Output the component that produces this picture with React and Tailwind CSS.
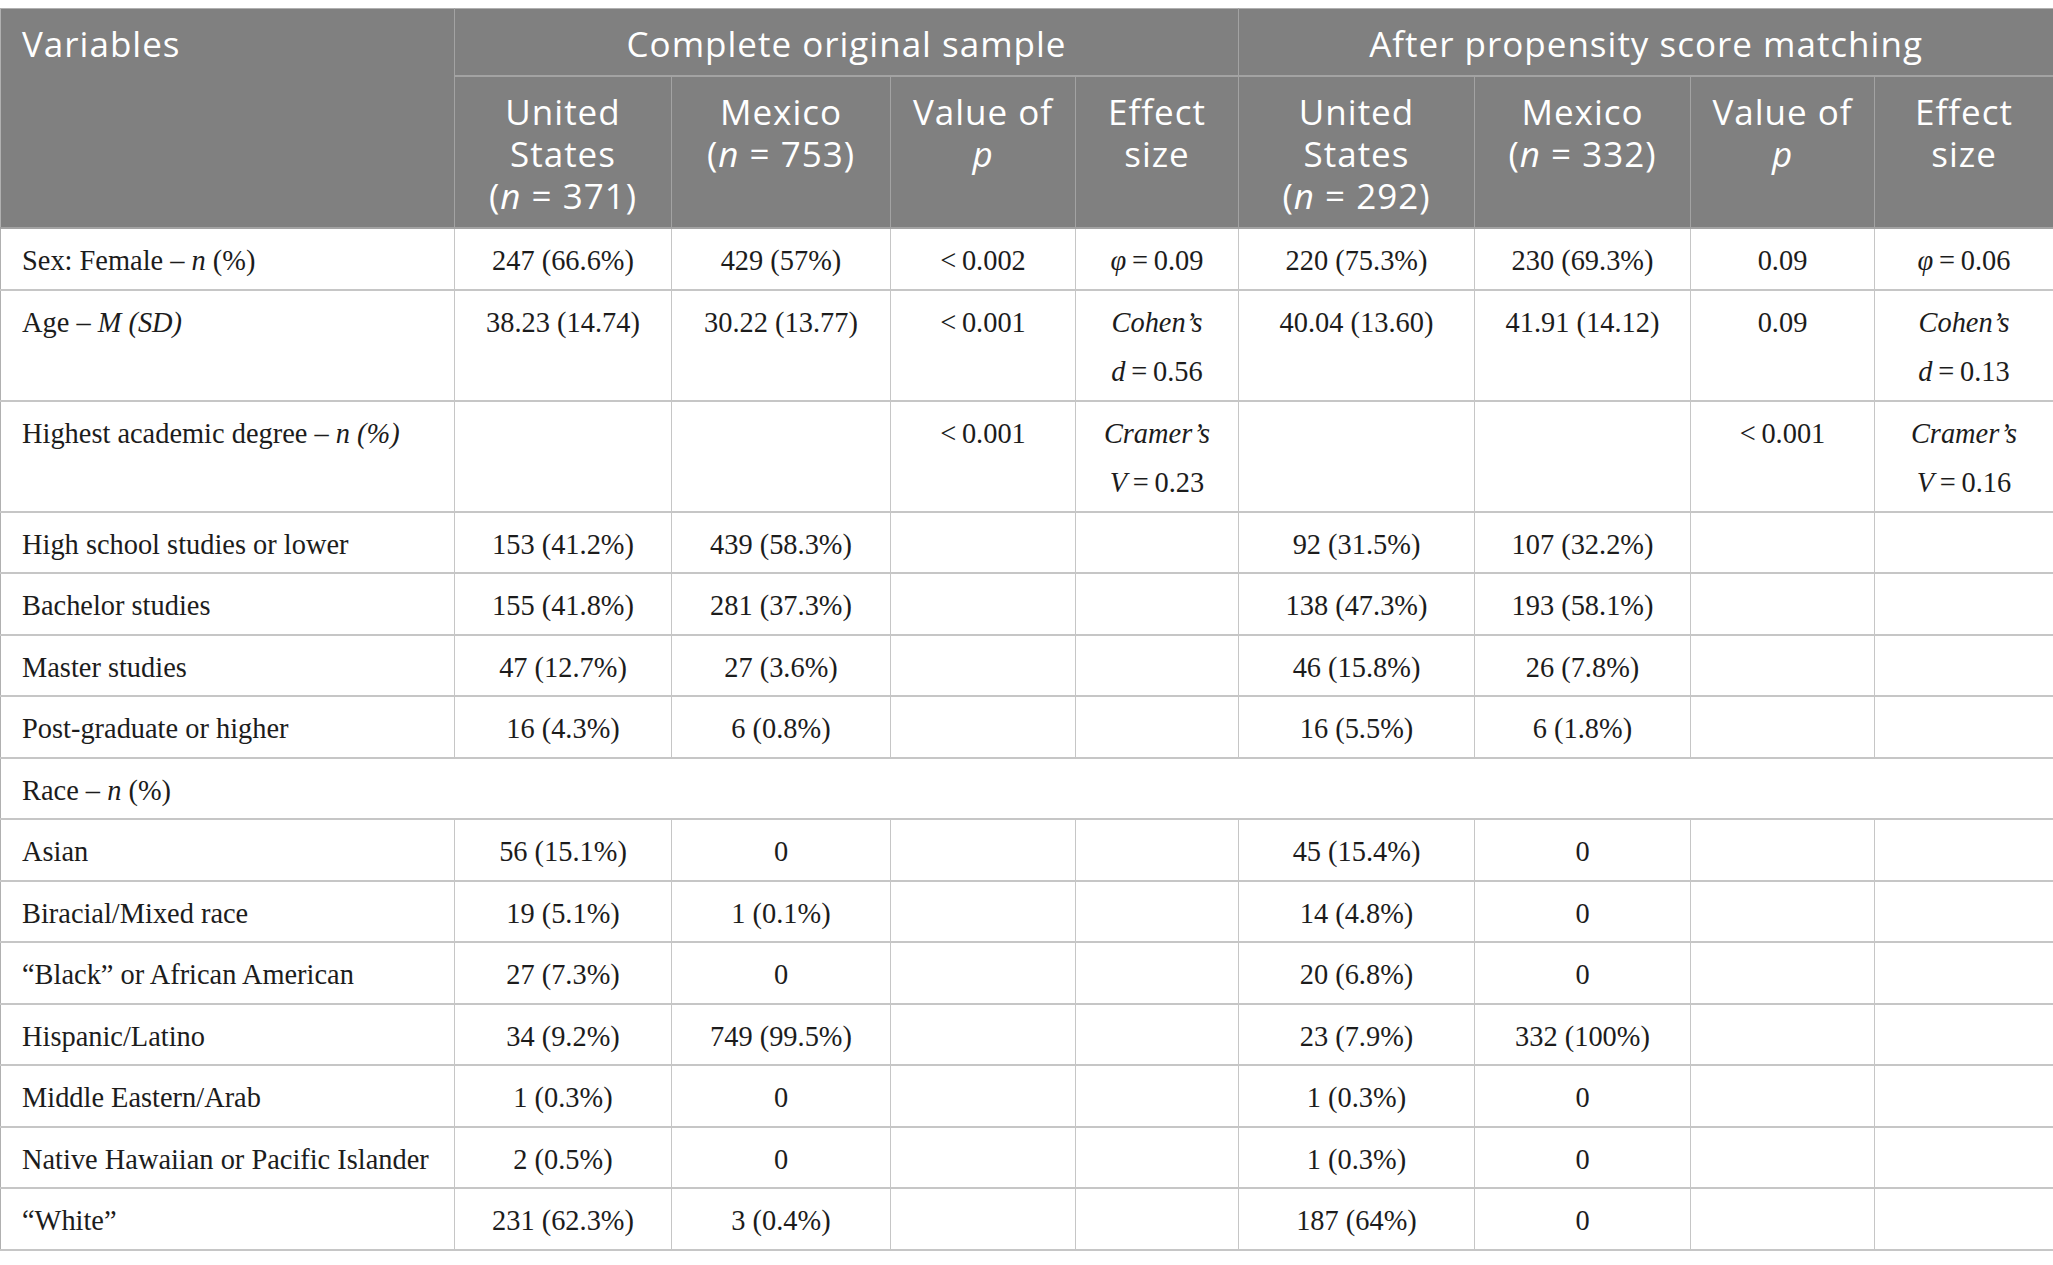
import React from 'react';

const cols = ['w-[454px]', 'w-[217px]', 'w-[219px]', 'w-[185px]', 'w-[163px]', 'w-[236px]', 'w-[216px]', 'w-[184px]', 'w-[179px]'];

const I = ({ children }) => <i>{children}</i>;

const Eq = ({ sym, val }) => (
    <>
        <I>{sym}</I>{'\u2009=\u20090'}{val}
    </>
);

const rows = [
    {
        label: <>Sex: Female – <I>n</I> (%)</>,
        cells: ['247 (66.6%)', '429 (57%)', '<\u20090.002', <Eq key="a" sym="φ" val=".09" />, '220 (75.3%)', '230 (69.3%)', '0.09', <Eq key="b" sym="φ" val=".06" />],
    },
    {
        label: <>Age – <I>M (SD)</I></>,
        cells: [
            '38.23 (14.74)',
            '30.22 (13.77)',
            '<\u20090.001',
            <><I>Cohen’s</I><br /><Eq sym="d" val=".56" /></>,
            '40.04 (13.60)',
            '41.91 (14.12)',
            '0.09',
            <><I>Cohen’s</I><br /><Eq sym="d" val=".13" /></>,
        ],
    },
    {
        label: <>Highest academic degree – <I>n (%)</I></>,
        cells: [
            '',
            '',
            '<\u20090.001',
            <><I>Cramer’s</I><br /><Eq sym="V" val=".23" /></>,
            '',
            '',
            '<\u20090.001',
            <><I>Cramer’s</I><br /><Eq sym="V" val=".16" /></>,
        ],
    },
    { label: 'High school studies or lower', cells: ['153 (41.2%)', '439 (58.3%)', '', '', '92 (31.5%)', '107 (32.2%)', '', ''] },
    { label: 'Bachelor studies', cells: ['155 (41.8%)', '281 (37.3%)', '', '', '138 (47.3%)', '193 (58.1%)', '', ''] },
    { label: 'Master studies', cells: ['47 (12.7%)', '27 (3.6%)', '', '', '46 (15.8%)', '26 (7.8%)', '', ''] },
    { label: 'Post-graduate or higher', cells: ['16 (4.3%)', '6 (0.8%)', '', '', '16 (5.5%)', '6 (1.8%)', '', ''] },
    { label: <>Race – <I>n</I> (%)</>, full: true },
    { label: 'Asian', cells: ['56 (15.1%)', '0', '', '', '45 (15.4%)', '0', '', ''] },
    { label: 'Biracial/Mixed race', cells: ['19 (5.1%)', '1 (0.1%)', '', '', '14 (4.8%)', '0', '', ''] },
    { label: '“Black” or African American', cells: ['27 (7.3%)', '0', '', '', '20 (6.8%)', '0', '', ''] },
    { label: 'Hispanic/Latino', cells: ['34 (9.2%)', '749 (99.5%)', '', '', '23 (7.9%)', '332 (100%)', '', ''] },
    { label: 'Middle Eastern/Arab', cells: ['1 (0.3%)', '0', '', '', '1 (0.3%)', '0', '', ''] },
    { label: 'Native Hawaiian or Pacific Islander', cells: ['2 (0.5%)', '0', '', '', '1 (0.3%)', '0', '', ''] },
    { label: '“White”', cells: ['231 (62.3%)', '3 (0.4%)', '', '', '187 (64%)', '0', '', ''] },
];

const App = () => {
    const th = 'border-r border-b-2 border-[#a3a3a3] px-2 pt-[14px] pb-[10px] align-top font-normal text-center';
    const td = 'border-r border-b-2 border-[#c6c6c6] px-2 pt-[7px] pb-[3px] align-top text-center';

    return (
        <div className="bg-white min-h-screen pt-[8px]">
            <table
                className="w-[2053px] table-fixed border-collapse border-t border-l border-r border-[#b0b0b0]"
                style={{ fontFamily: '"Liberation Serif", serif' }}
            >
                <colgroup>
                    {cols.map((c, i) => (
                        <col key={i} className={c} />
                    ))}
                </colgroup>
                <thead
                    className="bg-[#808080] text-white text-[35px] leading-[42px] tracking-[1px]"
                    style={{ fontFamily: '"Open Sans", sans-serif' }}
                >
                    <tr>
                        <th rowSpan={2} className={th + ' !text-left pl-[21px]'}>
                            Variables
                        </th>
                        <th colSpan={4} className={th}>
                            Complete original sample
                        </th>
                        <th colSpan={4} className={th}>
                            After propensity score matching
                        </th>
                    </tr>
                    <tr>
                        {[0, 1].map((k) => (
                            <React.Fragment key={k}>
                                <th className={th}>
                                    United
                                    <br />
                                    States
                                    <br />(<I>n</I> = {k === 0 ? '371' : '292'})
                                </th>
                                <th className={th}>
                                    Mexico
                                    <br />(<I>n</I> = {k === 0 ? '753' : '332'})
                                </th>
                                <th className={th}>
                                    Value of
                                    <br />
                                    <I>p</I>
                                </th>
                                <th className={th}>
                                    Effect
                                    <br />
                                    size
                                </th>
                            </React.Fragment>
                        ))}
                    </tr>
                </thead>
                <tbody className="text-[#1c1c1c] text-[28.4px] leading-[49.5px]">
                    {rows.map((r, ri) => (
                        <tr key={ri}>
                            {r.full ? (
                                <td colSpan={9} className={td + ' !text-left pl-[21px]'}>
                                    {r.label}
                                </td>
                            ) : (
                                <>
                                    <td className={td + ' !text-left pl-[21px]'}>{r.label}</td>
                                    {r.cells.map((c, ci) => (
                                        <td key={ci} className={td}>
                                            {c}
                                        </td>
                                    ))}
                                </>
                            )}
                        </tr>
                    ))}
                </tbody>
            </table>
        </div>
    );
};

export default App;
